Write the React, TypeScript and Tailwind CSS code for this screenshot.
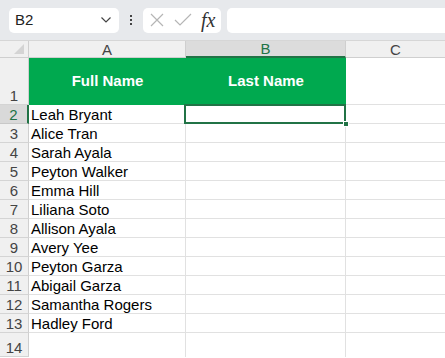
import React from 'react';

const names = [
  'Leah Bryant',
  'Alice Tran',
  'Sarah Ayala',
  'Peyton Walker',
  'Emma Hill',
  'Liliana Soto',
  'Allison Ayala',
  'Avery Yee',
  'Peyton Garza',
  'Abigail Garza',
  'Samantha Rogers',
  'Hadley Ford',
];

const RowHead: React.FC<{ n: number; active?: boolean; h: string }> = ({ n, active, h }) => (
  <div
    className={`${h} w-[29px] shrink-0 flex items-end justify-center text-[15px] leading-[17px] border-b ${
      active
        ? 'bg-[#d9d9d9] text-[#217346] border-b-[#c8c8c8] border-r-2 border-r-[#217346]'
        : 'bg-[#f0f0f0] text-[#444] border-b-[#d4d4d4] border-r border-r-[#cfcfcf]'
    }`}
  >
    {n}
  </div>
);

const App: React.FC = () => {
  return (
    <div className="w-[445px] h-[358px] overflow-hidden bg-white font-['Liberation_Sans',Arial,sans-serif] text-black">
      {/* formula bar */}
      <div className="h-[40px] bg-[#e7e9ec] flex items-center pl-[9px]">
        <div className="w-[110px] h-[25px] bg-white rounded-[5px] flex items-center justify-between pl-[6px] pr-[7px]">
          <span className="text-[15px] text-[#222]">B2</span>
          <svg width="12" height="8" viewBox="0 0 12 8" fill="none" stroke="#444" strokeWidth="1.2">
            <path d="M1.5 1.5 L6 6 L10.5 1.5" />
          </svg>
        </div>
        <div className="w-[24px] flex flex-col items-center gap-[2px]">
          <span className="w-[2px] h-[2px] bg-[#444]" />
          <span className="w-[2px] h-[2px] bg-[#444]" />
          <span className="w-[2px] h-[2px] bg-[#444]" />
        </div>
        <div className="w-[78px] h-[25px] bg-white rounded-[5px] flex items-center pl-[7px]">
          <svg width="14" height="14" viewBox="0 0 14 14" fill="none" stroke="#b5b5b5" strokeWidth="1.2">
            <path d="M1 1 L13 13 M13 1 L1 13" />
          </svg>
          <svg className="ml-[10px]" width="18" height="14" viewBox="0 0 18 14" fill="none" stroke="#b5b5b5" strokeWidth="1.2">
            <path d="M1 7 L6 12 L17 1" />
          </svg>
          <span className="ml-[9px] text-[20px] italic text-[#333] font-['Liberation_Serif',serif] leading-none">
            fx
          </span>
        </div>
        <div className="ml-[6px] flex-1 h-[25px] bg-white rounded-l-[5px]" />
      </div>

      {/* column headers */}
      <div className="flex h-[18px] border-t border-[#d6d6d6]">
        <div className="w-[29px] shrink-0 bg-[#f0f0f0] border-r border-b border-[#cfcfcf] relative">
          <div className="absolute right-[4px] bottom-[3px] w-0 h-0 border-l-[10px] border-l-transparent border-b-[10px] border-b-[#d4d4d4]" />
        </div>
        <div className="w-[157px] shrink-0 bg-[#f0f0f0] border-r border-b border-[#cfcfcf] flex items-center justify-center text-[15px] text-[#444] leading-none">
          A
        </div>
        <div className="w-[160px] shrink-0 bg-[#dcdcdc] border-r border-[#cfcfcf] border-b-2 border-b-[#217346] flex items-center justify-center text-[15px] text-[#217346] leading-none">
          B
        </div>
        <div className="flex-1 bg-[#f0f0f0] border-b border-[#cfcfcf] flex items-center justify-center text-[15px] text-[#444] leading-none">
          C
        </div>
      </div>

      {/* row 1 */}
      <div className="flex">
        <RowHead n={1} h="h-[47px]" />
        <div className="w-[317px] shrink-0 h-[47px] bg-[#00a94f] flex text-white font-bold text-[15px]">
          <div className="w-[157px] flex items-center justify-center">Full Name</div>
          <div className="w-[160px] flex items-center justify-center">Last Name</div>
        </div>
        <div className="flex-1 h-[47px] border-b border-[#e1e1e1]" />
      </div>

      {/* data rows */}
      {names.map((name, i) => (
        <div key={name} className="flex">
          <RowHead n={i + 2} active={i === 0} h="h-[19px]" />
          <div className="w-[157px] shrink-0 h-[19px] border-r border-b border-[#e1e1e1] flex items-end pl-[2px] text-[15px] leading-[17px]">
            {name}
          </div>
          <div className="w-[160px] shrink-0 h-[19px] border-r border-b border-[#e1e1e1] relative">
            {i === 0 && (
              <>
                <div className="absolute left-[-2px] top-[-1px] right-[-1px] bottom-[-1px] border-2 border-[#217346] z-10" />
                <div className="absolute right-[-4px] bottom-[-4px] w-[6px] h-[6px] bg-[#217346] border border-white z-20" />
              </>
            )}
          </div>
          <div className="flex-1 h-[19px] border-b border-[#e1e1e1]" />
        </div>
      ))}

      {/* row 14 */}
      <div className="flex">
        <RowHead n={14} h="h-[24px]" />
        <div className="w-[157px] shrink-0 h-[24px] border-r border-[#e1e1e1]" />
        <div className="w-[160px] shrink-0 h-[24px] border-r border-[#e1e1e1]" />
        <div className="flex-1 h-[24px]" />
      </div>
    </div>
  );
};

export default App;
